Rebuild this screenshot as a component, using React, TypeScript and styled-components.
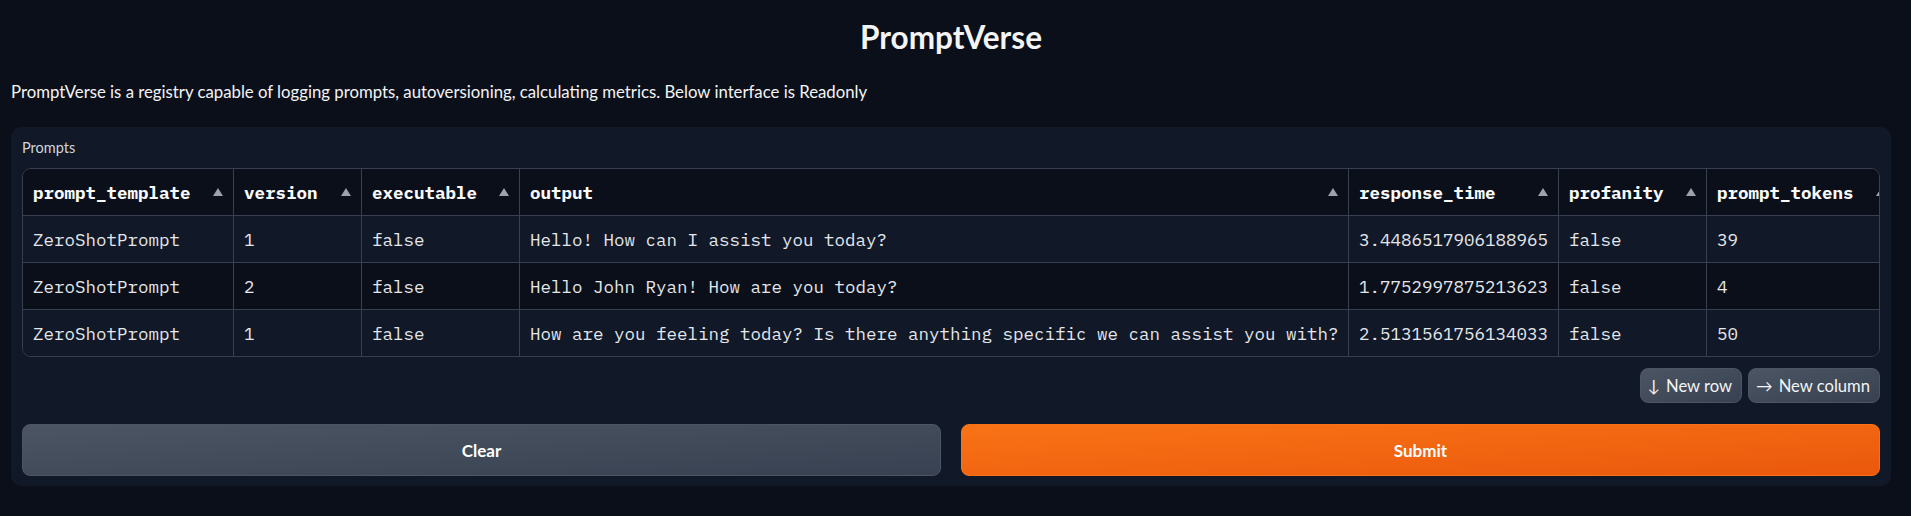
import React from "react";
import styled, { createGlobalStyle } from "styled-components";

const SANS = `"Source Sans Pro", Lato, "Liberation Sans", sans-serif`;
const MONO = `"IBM Plex Mono", "DejaVu Sans Mono", "Liberation Mono", monospace`;

const Global = createGlobalStyle`
  html, body { margin: 0; padding: 0; background: #0b0f19; }
  body { font-family: ${SANS}; color: #f3f4f6; }
  * { box-sizing: border-box; }
`;

const Page = styled.div`
  padding: 0 20px 30px 11px;
  display: flex;
  flex-direction: column;
`;

const Title = styled.h1`
  margin: 0;
  padding-top: 19px;
  height: 62px;
  text-align: center;
  font-family: ${SANS};
  font-weight: 700;
  font-size: 31.5px;
  line-height: 36px;
  color: #f3f4f6;
`;

const Description = styled.p`
  margin: 0;
  height: 65px;
  padding-top: 19px;
  font-size: 16.75px;
  line-height: 22px;
  color: #f3f4f6;
`;

const Panel = styled.div`
  background: #111827;
  border-radius: 10px;
  padding: 11px 11px 10px 11px;
  display: flex;
  flex-direction: column;
`;

const Label = styled.div`
  font-size: 14.5px;
  line-height: 20px;
  height: 30px;
  color: #d1d5db;
`;

const TableWrap = styled.div`
  border: 1px solid #374151;
  border-radius: 9px;
  overflow: hidden;
`;

const Grid = styled.div`
  display: grid;
  grid-template-columns: 211px 128px 158px 829px 210px 148px 190px;
  width: max-content;
  font-family: ${MONO};
  font-size: 17.5px;
`;

const Cell = styled.div<{ $head?: boolean; $alt?: boolean; $last?: boolean }>`
  height: ${(p) => (p.$last ? 46 : 47)}px;
  border-right: 1px solid #374151;
  border-bottom: ${(p) => (p.$last ? "none" : "1px solid #374151")};
  background: ${(p) => (p.$head || p.$alt ? "#0b0f19" : "#111827")};
  display: flex;
  align-items: center;
  justify-content: space-between;
  padding: 0 10px 0 10px;
  white-space: nowrap;
  font-weight: ${(p) => (p.$head ? 700 : 400)};
  color: ${(p) => (p.$head ? "#f9fafb" : "#e5e7eb")};
`;

const SortArrow = styled.span`
  width: 0;
  height: 0;
  border-left: 5px solid transparent;
  border-right: 5px solid transparent;
  border-bottom: 8px solid #9ca3af;
  flex: none;
  margin-left: 8px;
`;

const Toolbar = styled.div`
  display: flex;
  justify-content: flex-end;
  gap: 6px;
  margin-top: 11px;
`;

const SmallButton = styled.button`
  height: 35px;
  padding: 0 9px 0 7px;
  border-radius: 8px;
  border: 1px solid #4b5563;
  background: linear-gradient(to bottom right, #4b5563, #374151);
  color: #f3f4f6;
  font-family: ${SANS};
  font-size: 16.6px;
  display: flex;
  align-items: center;
  gap: 6px;
`;

const Actions = styled.div`
  display: grid;
  grid-template-columns: 1fr 1fr;
  gap: 20px;
  margin-top: 21px;
`;

const BigButton = styled.button<{ $primary?: boolean }>`
  height: 52px;
  border-radius: 8px;
  border: 1px solid ${(p) => (p.$primary ? "#f97316" : "#4b5563")};
  background: ${(p) =>
    p.$primary
      ? "linear-gradient(to bottom right, #f97316, #ea580c)"
      : "linear-gradient(to bottom right, #4b5563, #374151)"};
  color: #ffffff;
  font-family: ${SANS};
  font-weight: 700;
  font-size: 17px;
`;

const headers = [
  "prompt_template",
  "version",
  "executable",
  "output",
  "response_time",
  "profanity",
  "prompt_tokens",
];

const rows = [
  ["ZeroShotPrompt", "1", "false", "Hello! How can I assist you today?", "3.4486517906188965", "false", "39"],
  ["ZeroShotPrompt", "2", "false", "Hello John Ryan! How are you today?", "1.7752997875213623", "false", "4"],
  [
    "ZeroShotPrompt",
    "1",
    "false",
    "How are you feeling today? Is there anything specific we can assist you with?",
    "2.5131561756134033",
    "false",
    "50",
  ],
];

export default function App() {
  return (
    <>
      <Global />
      <Page>
        <Title>PromptVerse</Title>
        <Description>
          PromptVerse is a registry capable of logging prompts, autoversioning, calculating metrics. Below interface is Readonly
        </Description>
        <Panel>
          <Label>Prompts</Label>
          <TableWrap>
            <Grid>
              {headers.map((h) => (
                <Cell key={h} $head>
                  <span>{h}</span>
                  <SortArrow />
                </Cell>
              ))}
              {rows.map((r, i) =>
                r.map((c, j) => (
                  <Cell key={`${i}-${j}`} $alt={i === 1} $last={i === rows.length - 1}>
                    <span>{c}</span>
                  </Cell>
                ))
              )}
            </Grid>
          </TableWrap>
          <Toolbar>
            <SmallButton>
              <span>↓</span>
              <span>New row</span>
            </SmallButton>
            <SmallButton>
              <span>→</span>
              <span>New column</span>
            </SmallButton>
          </Toolbar>
          <Actions>
            <BigButton>Clear</BigButton>
            <BigButton $primary>Submit</BigButton>
          </Actions>
        </Panel>
      </Page>
    </>
  );
}
